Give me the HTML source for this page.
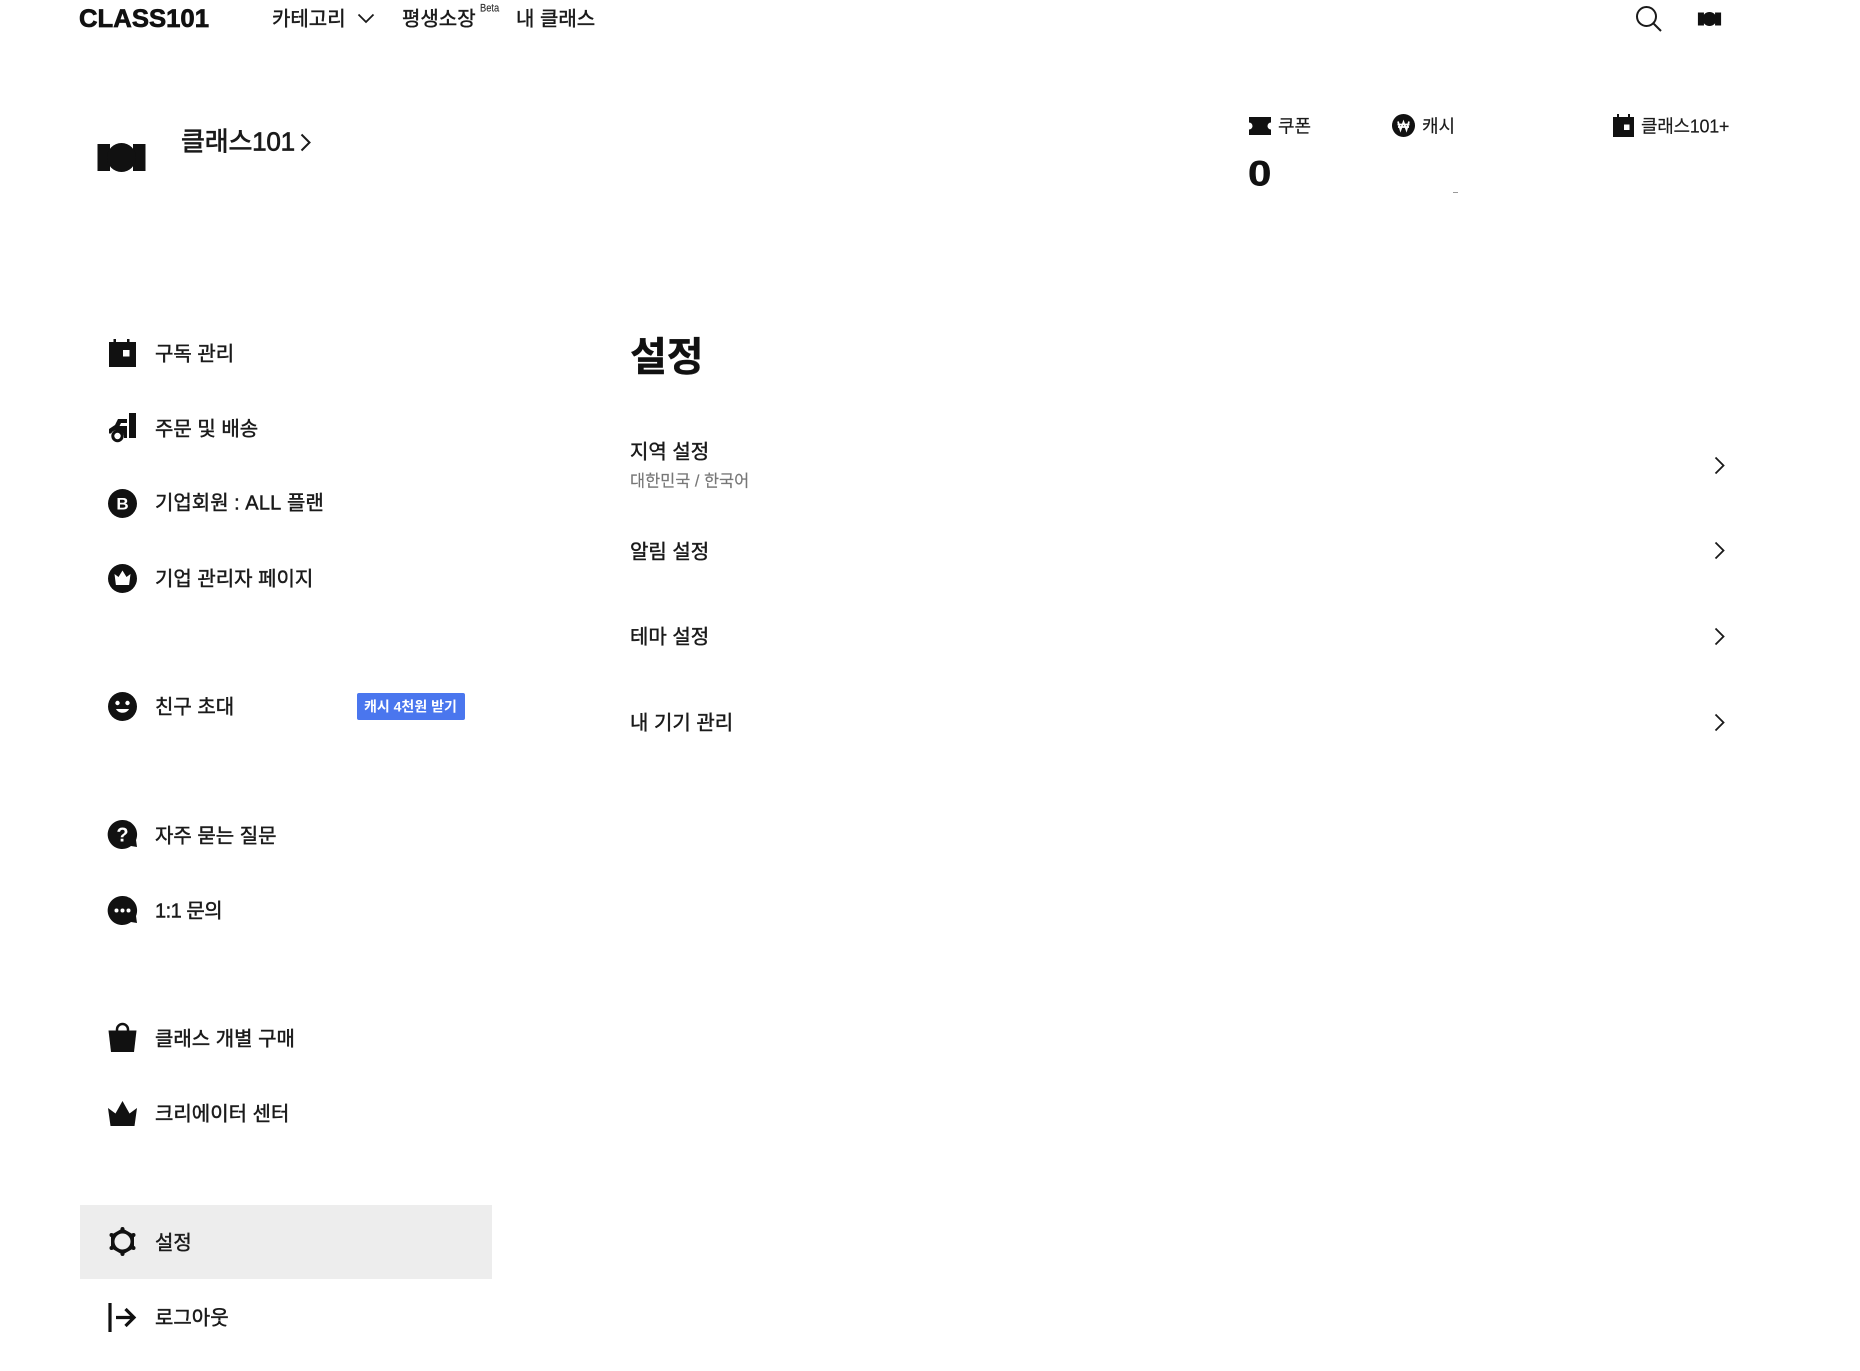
<!DOCTYPE html>
<html lang="ko">
<head>
<meta charset="utf-8">
<title>설정</title>
<style>
html,body{margin:0;padding:0;background:#fff}
body{position:relative;width:1860px;height:1371px;overflow:hidden;font-family:"Liberation Sans","Noto Sans CJK KR",sans-serif;color:#1a1a1a}
.t{position:absolute;white-space:nowrap;line-height:1;font-weight:400;transform:translateY(calc(-50% + 1.5px));-webkit-text-stroke:.45px currentColor}
.s{font-size:20px;left:155px}
.m{font-size:20px;left:630px}
.n{-webkit-text-stroke:.15px currentColor}
svg{position:absolute;display:block;overflow:visible}
.ic{left:108px;width:29px;height:29px}
</style>
</head>
<body>
<!-- top nav -->
<svg style="left:79px;top:6px;width:131px;height:24px" viewBox="0 0 131 24"><text x="0" y="21" font-family="Liberation Sans" font-weight="700" font-size="25" textLength="130" lengthAdjust="spacingAndGlyphs" fill="#111" stroke="#111" stroke-width=".7">CLASS101</text></svg>
<div class="t" style="left:272px;top:18px;font-size:20px">카테고리</div>
<svg style="left:357px;top:13px;width:18px;height:11px" viewBox="0 0 18 11"><path d="M1.500 1.500L9 9l7.500-7.500" fill="none" stroke="#1a1a1a" stroke-width="1.800"/></svg>
<div class="t" style="left:402px;top:18px;font-size:20px">평생소장</div>
<div class="t n" style="left:480px;top:9px;font-size:11px;color:#333;transform-origin:left center;transform:translateY(-50%) scaleX(.85)">Beta</div>
<div class="t" style="left:516px;top:18px;font-size:20px">내 클래스</div>

<svg style="left:1635px;top:5px;width:27px;height:27px" viewBox="0 0 27 27"><circle cx="11.500" cy="11.500" r="9.500" fill="none" stroke="#1a1a1a" stroke-width="2"/><path d="M18.500 18.500L26 26" stroke="#1a1a1a" stroke-width="2"/></svg>
<svg style="left:1697px;top:11.500px;width:25px;height:14px" viewBox="0 0 48 29"><path d="M0 1h12.500v27H0zM35.500 1H48v27H35.500z" fill="#111"/><circle cx="24" cy="14.500" r="14.500" fill="#111"/></svg>

<!-- profile -->
<svg style="left:96.500px;top:142.500px;width:49px;height:29px" viewBox="0 0 48 29"><path d="M0 1h12.500v27H0zM35.500 1H48v27H35.500z" fill="#111"/><circle cx="24" cy="14.500" r="14.500" fill="#111"/></svg>
<div class="t" style="left:181px;top:140px;font-size:26px;letter-spacing:-.2px;-webkit-text-stroke:.7px currentColor">클래스101</div>
<svg style="left:300px;top:133px;width:11px;height:19px" viewBox="0 0 11 19"><path d="M1.500 1.500L9.500 9.500l-8 8" fill="none" stroke="#1a1a1a" stroke-width="2"/></svg>

<svg style="left:1249px;top:117px;width:22px;height:18px" viewBox="0 0 22 18"><path d="M0 0h22v5.500a3.500 3.500 0 0 0 0 7V18H0v-5.500a3.500 3.500 0 0 0 0-7z" fill="#111"/></svg>
<div class="t n" style="left:1278px;top:124.500px;font-size:18px">쿠폰</div>
<svg style="left:1391.500px;top:114px;width:23px;height:23px" viewBox="0 0 23 23"><circle cx="11.500" cy="11.500" r="11.500" fill="#111"/><path d="M6 7.500l2.500 8.500 3-8 3 8L17 7.500M5.500 10.500h12M6 13h11" fill="none" stroke="#fff" stroke-width="1.700"/></svg>
<div class="t n" style="left:1422px;top:124.500px;font-size:18px">캐시</div>
<svg style="left:1613px;top:114px;width:21px;height:23px" viewBox="0 0 21 23"><path d="M0 3h4V0h2v3h9V0h2v3h4v20H0z" fill="#111"/><rect x="11" y="10.500" width="5.500" height="5.500" fill="#fff"/></svg>
<div class="t n" style="left:1641px;top:124.500px;font-size:18px;letter-spacing:-.3px">클래스101+</div>
<div class="t" style="left:1248px;top:173px;font-size:35px;font-weight:700;color:#111;transform-origin:left center;transform:translateY(calc(-50% + 1px)) scaleX(1.2)">0</div>
<div style="position:absolute;left:1453px;top:192px;width:5px;height:1px;background:#999"></div>

<!-- sidebar -->
<div style="position:absolute;left:80px;top:1205px;width:412px;height:74px;background:#ededed"></div>

<svg class="ic" style="top:338px" viewBox="0 0 29 29"><path d="M1 4h4.500V1h2.500v3h11V1h2.500v3H28v25H1z" fill="#111"/><rect x="15" y="12" width="6.500" height="6.500" fill="#fff"/></svg>
<div class="t s" style="top:352.500px">구독 관리</div>

<svg class="ic" style="top:413px" viewBox="0 0 29 29"><path d="M21 0h7v25h-7z" fill="#111"/><path d="M19 6v4h-6l-1.500 3H19v12h-3a7 7 0 0 0-13-4.500H1V16l6-4 3-6z" fill="#111"/><circle cx="9.500" cy="23" r="4.700" fill="#fff" stroke="#111" stroke-width="3"/></svg>
<div class="t s" style="top:428px">주문 및 배송</div>

<svg class="ic" style="top:488.500px" viewBox="0 0 29 29"><circle cx="14.500" cy="14.500" r="14.500" fill="#111"/><text x="14.500" y="20.500" text-anchor="middle" font-family="Liberation Sans" font-weight="700" font-size="17" fill="#fff">B</text></svg>
<div class="t s" style="top:502px">기업회원 : <span style="letter-spacing:.2px">ALL</span> 플랜</div>

<svg class="ic" style="top:564px" viewBox="0 0 29 29"><circle cx="14.500" cy="14.500" r="14.500" fill="#111"/><path d="M6.500 10l4 3L14.500 6.500l4 6.500 4-3-1.400 11H7.900z" fill="#fff"/></svg>
<div class="t s" style="top:577.500px">기업 관리자 페이지</div>

<svg class="ic" style="top:692px" viewBox="0 0 29 29"><circle cx="14.500" cy="14.500" r="14.500" fill="#111"/><circle cx="9.500" cy="11" r="2.200" fill="#fff"/><circle cx="19.500" cy="11" r="2.200" fill="#fff"/><path d="M8 17c2.500 5 10.500 5 13 0z" fill="#fff"/></svg>
<div class="t s" style="top:706px">친구 초대</div>
<div style="position:absolute;left:357px;top:693px;width:108px;height:27px;background:#4a76ee;border-radius:2px"></div>
<div class="t" style="left:364px;top:705px;font-size:14px;font-weight:700;color:#fff;-webkit-text-stroke:0">캐시 4천원 받기</div>

<svg class="ic" style="top:820px" viewBox="0 0 29 29"><path d="M14.500 0a14.500 14.500 0 0 1 13.500 20l1 7-6-1A14.500 14.500 0 1 1 14.500 0z" fill="#111"/><text x="14.500" y="21.500" text-anchor="middle" font-family="Liberation Sans" font-weight="700" font-size="20" fill="#fff">?</text></svg>
<div class="t s" style="top:835px">자주 묻는 질문</div>

<svg class="ic" style="top:896px" viewBox="0 0 29 29"><path d="M14.500 0a14.500 14.500 0 0 1 13.500 20l1 7-6-1A14.500 14.500 0 1 1 14.500 0z" fill="#111"/><circle cx="8.500" cy="14.500" r="2" fill="#fff"/><circle cx="14.500" cy="14.500" r="2" fill="#fff"/><circle cx="20.500" cy="14.500" r="2" fill="#fff"/></svg>
<div class="t s" style="top:910px;letter-spacing:-.5px">1:1 문의</div>

<svg class="ic" style="top:1023px" viewBox="0 0 29 29"><path d="M0.500 7.500h28l-2.500 21.500H3z" fill="#111"/><path d="M9 9V6.500a5.500 5.500 0 0 1 11 0V9" fill="none" stroke="#111" stroke-width="2.500"/></svg>
<div class="t s" style="top:1038px">클래스 개별 구매</div>

<svg class="ic" style="top:1100px" viewBox="0 0 29 29"><path d="M0 8l7.500 5.500L14.500 1l7 12.500L29 8l-2.500 18h-24z" fill="#111"/></svg>
<div class="t s" style="top:1113px">크리에이터 센터</div>

<svg class="ic" style="top:1227px" viewBox="0 0 29 29"><path d="M14.500 2.500L25 8.500v12l-10.500 6-10.500-6v-12z" fill="#111" stroke="#111" stroke-width="2" stroke-linejoin="round"/><circle cx="14.500" cy="14.500" r="8" fill="#ededed"/><circle cx="14.500" cy="2" r="2" fill="#111"/><circle cx="25.500" cy="8" r="2" fill="#111"/><circle cx="25.500" cy="21" r="2" fill="#111"/><circle cx="14.500" cy="27" r="2" fill="#111"/><circle cx="3.500" cy="21" r="2" fill="#111"/><circle cx="3.500" cy="8" r="2" fill="#111"/></svg>
<div class="t s" style="top:1242px">설정</div>

<svg class="ic" style="top:1303px" viewBox="0 0 29 29"><path d="M2 0v29" stroke="#111" stroke-width="3.200"/><path d="M8 14.500h18M17.500 6l8.500 8.500-8.500 8.500" fill="none" stroke="#111" stroke-width="3.200"/></svg>
<div class="t s" style="top:1317px">로그아웃</div>

<!-- main -->
<div class="t" style="left:630px;top:355.500px;font-size:40px;font-weight:700;color:#111;-webkit-text-stroke:.4px currentColor">설정</div>

<div class="t m" style="top:450.500px">지역 설정</div>
<div class="t n" style="left:630px;top:480px;font-size:16.400px;color:#777">대한민국 / 한국어</div>
<svg style="left:1714px;top:456px;width:11px;height:19px" viewBox="0 0 11 19"><path d="M1.500 1.500L9.500 9.500l-8 8" fill="none" stroke="#1a1a1a" stroke-width="1.800"/></svg>

<div class="t m" style="top:551px">알림 설정</div>
<svg style="left:1714px;top:541px;width:11px;height:19px" viewBox="0 0 11 19"><path d="M1.500 1.500L9.500 9.500l-8 8" fill="none" stroke="#1a1a1a" stroke-width="1.800"/></svg>

<div class="t m" style="top:636px">테마 설정</div>
<svg style="left:1714px;top:627px;width:11px;height:19px" viewBox="0 0 11 19"><path d="M1.500 1.500L9.500 9.500l-8 8" fill="none" stroke="#1a1a1a" stroke-width="1.800"/></svg>

<div class="t m" style="top:722px">내 기기 관리</div>
<svg style="left:1714px;top:712.500px;width:11px;height:19px" viewBox="0 0 11 19"><path d="M1.500 1.500L9.500 9.500l-8 8" fill="none" stroke="#1a1a1a" stroke-width="1.800"/></svg>
</body>
</html>
